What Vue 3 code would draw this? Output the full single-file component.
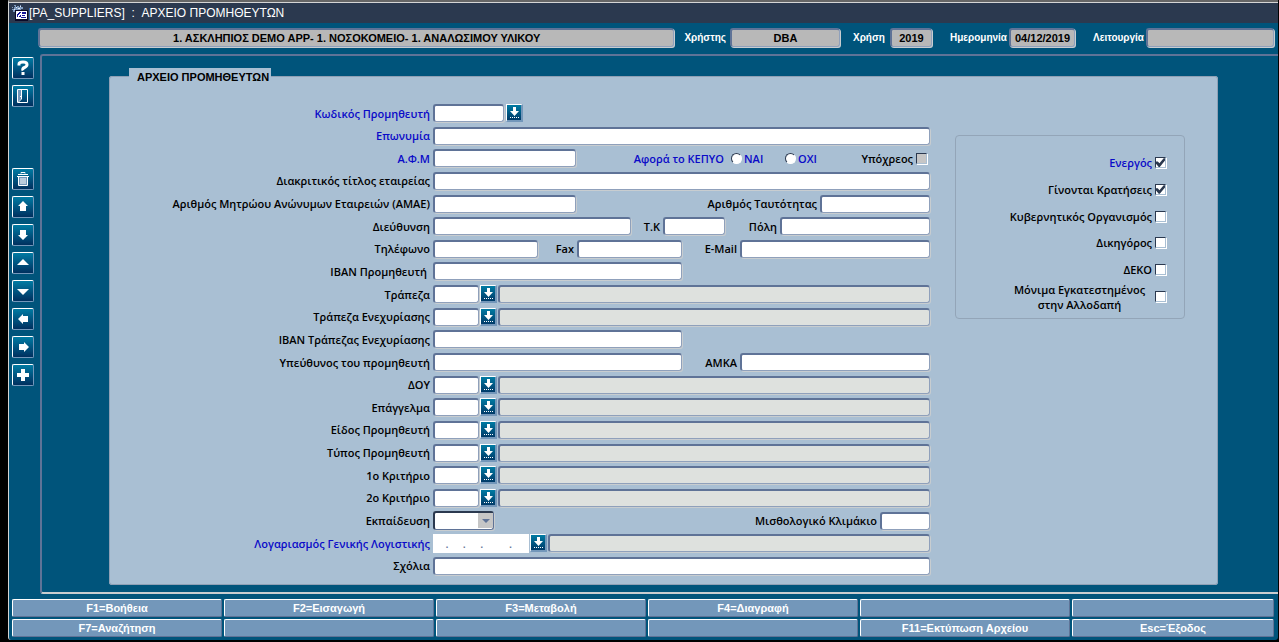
<script setup>
import { ref } from 'vue'

const kepyo = ref('')
const flags = ref([
  { label: 'Ενεργός', on: true, key: true },
  { label: 'Γίνονται Κρατήσεις', on: true },
  { label: 'Κυβερνητικός Οργανισμός', on: false },
  { label: 'Δικηγόρος', on: false },
  { label: 'ΔΕΚΟ', on: false },
  { label: 'Μόνιμα Εγκατεστημένος στην Αλλοδαπή', on: false },
])

const lookupsA = ['Τράπεζα', 'Τράπεζα Ενεχυρίασης']
const lookupsB = ['ΔΟΥ', 'Επάγγελμα', 'Είδος Προμηθευτή', 'Τύπος Προμηθευτή', '1ο Κριτήριο', '2ο Κριτήριο']

const tools = [
  { name: 'Πρώτη εγγραφή', d: 'M11 5l5 5h-2v5H8v-5H6z' },
  { name: 'Τελευταία εγγραφή', d: 'M8 6h6v5h2l-5 5-5-5h2z' },
  { name: 'Προηγούμενη εγγραφή', d: 'M11 7l6 6H5z' },
  { name: 'Επόμενη εγγραφή', d: 'M5 9h12l-6 6z' },
  { name: 'Προηγούμενο πεδίο', d: 'M6 11l5-5v2h5v6h-5v2z' },
  { name: 'Επόμενο πεδίο', d: 'M17 11l-5-5v2H7v6h5v2z' },
  { name: 'Νέα εγγραφή', d: 'M9 5h4v4h4v4h-4v4H9v-4H5V9h4z' },
]

const keys = [
  'F1=Βοήθεια', 'F2=Εισαγωγή', 'F3=Μεταβολή', 'F4=Διαγραφή', '', '',
  'F7=Αναζήτηση', '', '', '', 'F11=Εκτύπωση Αρχείου', 'Esc=Έξοδος',
]
</script>

<template>
  <div class="window">
    <header class="title">
      <svg class="logo" viewBox="0 0 16 16" aria-hidden="true" shape-rendering="crispEdges">
        <path d="M0 2h1v1H0zM2 0h2v2h1V1h2v1h1V0h1v2h2v2H9v1H3v2H1V5H0V4h2V2h1z" fill="#7f9cc0" />
        <path d="M4 2h1v1H4zM6 3h2v1H6zM2 4h1v1H2zM8 1h1v1H8z" fill="#dfe8f4" />
        <path d="M3 5h13v11H3z" fill="#0a0a28" />
        <path d="M4 6h11v8H4z" fill="#fff" />
        <path d="M5 9h1V8h1V7h2v1H8v1H7v1H6v2H5zM8 10h1v2H7v-1h1z" fill="#14149a" />
        <path d="M10 7h4v2h-4zM10 10h3v1h-3zM9 12h5v1H9z" fill="#14149a" />
      </svg>
      <h1>[PA_SUPPLIERS]&nbsp; :&nbsp; ΑΡΧΕΙΟ ΠΡΟΜΗΘΕΥΤΩΝ</h1>
    </header>

    <div class="status">
      <input class="info company" readonly aria-label="Εφαρμογή" value="1. ΑΣΚΛΗΠΙΟΣ DEMO APP- 1. ΝΟΣΟΚΟΜΕΙΟ- 1. ΑΝΑΛΩΣΙΜΟΥ ΥΛΙΚΟΥ" />
      <label for="user">Χρήστης</label>
      <input id="user" class="info user" readonly value="DBA" />
      <label for="year" class="mid">Χρήση</label>
      <input id="year" class="info year" readonly value="2019" />
      <label for="date" class="wide">Ημερομηνία</label>
      <input id="date" class="info date" readonly value="04/12/2019" />
      <label for="mode" class="wide">Λειτουργία</label>
      <input id="mode" class="info mode" readonly value="" />
    </div>

    <div class="body">
      <nav class="tools">
        <button type="button" aria-label="Βοήθεια">
          <svg viewBox="0 0 22 22"><path d="M7 8.500V7q0-2 4-2t4 2.500q0 2-2.500 3T11 13.500M11 15v3" fill="none" stroke="#fff" stroke-width="3" /></svg>
        </button>
        <button type="button" aria-label="Έξοδος">
          <svg viewBox="0 0 22 22"><path d="M5.500 4.500h10v13h-10z" fill="none" stroke="#fff" /><path d="M6 5h3v9l-3 3z" fill="#7397ba" /><path d="M9.500 5v9l-3 3M8 11.500h1" fill="none" stroke="#fff" /></svg>
        </button>
        <button type="button" class="apart" aria-label="Διαγραφή">
          <svg viewBox="0 0 22 22"><path d="M7 9h8v8H7z" fill="#7397ba" /><path d="M9 5.500V4.500h4v1M6 6.500h10M5 8.500h12M6.500 9v8.500h9V9M9 10v6M11 10v6M13 10v6" fill="none" stroke="#fff" /></svg>
        </button>
        <button v-for="t in tools" :key="t.name" type="button" :aria-label="t.name">
          <svg viewBox="0 0 22 22"><path :d="t.d" fill="#fff" /></svg>
        </button>
      </nav>

      <main class="frame">
        <fieldset class="panel">
          <legend>ΑΡΧΕΙΟ ΠΡΟΜΗΘΕΥΤΩΝ</legend>
          <form class="form" @submit.prevent>
            <div class="row">
              <label class="lead key" for="code">Κωδικός Προμηθευτή</label>
              <input id="code" class="w71" />
              <button type="button" class="lov gap" aria-label="Λίστα">
                <svg viewBox="0 0 14 15"><path d="M6 2h3v4h3l-4.500 5L3 6h3z" fill="#fff" /><path d="M3 12.500h9" stroke="#fff" stroke-dasharray="1 1" /></svg>
              </button>
            </div>
            <div class="row">
              <label class="lead key" for="name">Επωνυμία</label>
              <input id="name" class="fill" />
            </div>
            <div class="row">
              <label class="lead key" for="afm">Α.Φ.Μ</label>
              <input id="afm" class="w143" />
              <span class="next key kepyo">Αφορά το ΚΕΠΥΟ</span>
              <label class="radio key"><input v-model="kepyo" type="radio" name="kepyo" value="y" />ΝΑΙ</label>
              <label class="radio key"><input v-model="kepyo" type="radio" name="kepyo" value="n" />ΟΧΙ</label>
              <label class="liable">Υπόχρεος<input type="checkbox" class="off" /></label>
            </div>
            <div class="row">
              <label class="lead" for="brand">Διακριτικός τίτλος εταιρείας</label>
              <input id="brand" class="fill" />
            </div>
            <div class="row">
              <label class="lead" for="amae">Αριθμός Μητρώου Ανώνυμων Εταιρειών (ΑΜΑΕ)</label>
              <input id="amae" class="w143" />
              <label class="next" for="idno">Αριθμός Ταυτότητας</label>
              <input id="idno" class="w110" />
            </div>
            <div class="row">
              <label class="lead" for="addr">Διεύθυνση</label>
              <input id="addr" class="fill" />
              <label class="mid" for="zip">Τ.Κ</label>
              <input id="zip" class="w62" />
              <label class="mid city" for="city">Πόλη</label>
              <input id="city" class="w150" />
            </div>
            <div class="row">
              <label class="lead" for="tel">Τηλέφωνο</label>
              <input id="tel" class="w105" />
              <label class="mid fax" for="fax">Fax</label>
              <input id="fax" class="w105" />
              <label class="next" for="mail">E-Mail</label>
              <input id="mail" class="w190" />
            </div>
            <div class="row">
              <label class="lead inset" for="iban">ΙΒΑΝ Προμηθευτή</label>
              <input id="iban" class="w249" />
            </div>
            <div v-for="(l, i) in lookupsA" :key="l" class="row">
              <label class="lead" :for="'a' + i">{{ l }}</label>
              <input :id="'a' + i" class="w46" />
              <button type="button" class="lov" :aria-label="'Λίστα ' + l">
                <svg viewBox="0 0 14 15"><path d="M6 2h3v4h3l-4.500 5L3 6h3z" fill="#fff" /><path d="M3 12.500h9" stroke="#fff" stroke-dasharray="1 1" /></svg>
              </button>
              <input class="fill gray" readonly :aria-label="'Περιγραφή ' + l" />
            </div>
            <div class="row">
              <label class="lead" for="iban2">ΙΒΑΝ Τράπεζας Ενεχυρίασης</label>
              <input id="iban2" class="w249" />
            </div>
            <div class="row">
              <label class="lead" for="resp">Υπεύθυνος του προμηθευτή</label>
              <input id="resp" class="w249" />
              <label class="next" for="amka">ΑΜΚΑ</label>
              <input id="amka" class="w190" />
            </div>
            <div v-for="(l, i) in lookupsB" :key="l" class="row">
              <label class="lead" :for="'b' + i">{{ l }}</label>
              <input :id="'b' + i" class="w46" />
              <button type="button" class="lov" :aria-label="'Λίστα ' + l">
                <svg viewBox="0 0 14 15"><path d="M6 2h3v4h3l-4.500 5L3 6h3z" fill="#fff" /><path d="M3 12.500h9" stroke="#fff" stroke-dasharray="1 1" /></svg>
              </button>
              <input class="fill gray" readonly :aria-label="'Περιγραφή ' + l" />
            </div>
            <div class="row">
              <label class="lead" for="edu">Εκπαίδευση</label>
              <span class="pick">
                <select id="edu"><option></option></select>
                <svg viewBox="0 0 15 15" aria-hidden="true"><path d="M0 0h15v15H0z" fill="#c6c6c6" /><path d="M4 6h8l-4 4z" fill="#5f7397" /></svg>
              </span>
              <label class="next" for="scale">Μισθολογικό Κλιμάκιο</label>
              <input id="scale" class="w50" />
            </div>
            <div class="row">
              <label class="lead key" for="acc">Λογαριασμός Γενικής Λογιστικής</label>
              <input id="acc" class="mask" value="   .     .     .         ." />
              <button type="button" class="lov" aria-label="Λίστα λογαριασμών">
                <svg viewBox="0 0 14 15"><path d="M6 2h3v4h3l-4.500 5L3 6h3z" fill="#fff" /><path d="M3 12.500h9" stroke="#fff" stroke-dasharray="1 1" /></svg>
              </button>
              <input class="fill gray" readonly aria-label="Περιγραφή λογαριασμού" />
            </div>
            <div class="row">
              <label class="lead" for="notes">Σχόλια</label>
              <input id="notes" class="fill" />
            </div>
          </form>

          <div class="flags">
            <label v-for="f in flags" :key="f.label" :class="{ key: f.key }">
              <span>{{ f.label }}</span><input v-model="f.on" type="checkbox" />
            </label>
          </div>
        </fieldset>
      </main>
    </div>

    <footer class="keys">
      <button v-for="(k, i) in keys" :key="i" type="button">{{ k }}</button>
    </footer>
  </div>
</template>

<style>
body {
  background: #000;
}
</style>

<style scoped>
* {
  box-sizing: border-box;
}
.window {
  display: flex;
  flex-direction: column;
  min-height: calc(100vh - 2px);
  margin: 0 1px 2px 8px;
  border-top: 2px solid #666;
  border-left: 1px solid #d5d5d5;
  border-radius: 0 0 3px 3px;
  background: #00547b;
  font: 600 11px/15px "Open Sans", "Noto Sans", sans-serif;
  color: #000;
}
.title {
  display: flex;
  align-items: center;
  gap: 1px;
  height: 21px;
  padding-left: 3px;
  border-top: 1px solid #d5d5d5;
  background: #2b394f;
}
.logo {
  width: 16px;
  height: 16px;
}
h1 {
  margin: 0;
  font: 12px/16px "Liberation Sans", sans-serif;
  color: #fff;
}
input {
  height: 18px;
  margin: 0;
  padding: 0 4px;
  border: 1px solid #8fa0bb;
  border-top: 2px solid #5f7397;
  border-left: 2px solid #5f7397;
  border-radius: 3px;
  outline: none;
  background: #fff;
  box-shadow: 1px 1px 0 #c8cdd0;
  font: inherit;
  min-width: 0;
}
.status {
  display: flex;
  align-items: center;
  padding: 5px 4px 0 29px;
  font: bold 11px/14px "Liberation Sans", sans-serif;
}
.status label {
  margin: 0 4px 0 10px;
  font-size: 10px;
  color: #fff;
  white-space: nowrap;
}
.status label.mid {
  width: auto;
  margin: 0 5px 0 13px;
}
.status label.wide {
  margin: 0 2px 0 18px;
}
.info {
  height: 19px;
  background: #b8b8b8;
  text-align: center;
}
.company {
  flex: 1;
}
.user {
  width: 110px;
}
.year {
  width: 42px;
}
.date {
  width: 66px;
  padding: 0;
}
.mode {
  width: 128px;
}
.body {
  display: flex;
  flex: 1;
  padding-top: 7px;
}
.tools {
  display: flex;
  flex-direction: column;
  gap: 6px;
  width: 31px;
  padding: 3px 0 0 3px;
}
.tools button {
  width: 22px;
  height: 22px;
  padding: 0;
  border: 1px solid #fff;
  border-right-color: #7397ba;
  border-bottom-color: #7397ba;
  border-radius: 2px;
  background: linear-gradient(#007ba3, #00305f);
}
.tools .apart {
  margin-top: 55px;
}
.tools svg {
  display: block;
  width: 22px;
  height: 22px;
  margin: -1px;
}
.frame {
  display: flex;
  flex: 1;
  padding: 12px 60px 7px 67px;
  border: 2px solid #5f7397;
  border-right: 0;
  border-bottom-color: #c8cdd0;
  border-radius: 3px 0 0 3px;
}
.panel {
  display: flex;
  flex: 1;
  min-width: 0;
  margin: 0;
  padding: 19px 32px 9px 0;
  border: 1px solid #8fa0b5;
  border-radius: 3px;
  background: #a9bfd3;
}
legend {
  height: 17px;
  margin-left: 19px;
  padding: 2px 2px 0 8px;
  background: #a9bfd3;
  font: bold 11px/15px "Liberation Sans", sans-serif;
}
.form {
  display: flex;
  flex: 1;
  flex-direction: column;
  justify-content: space-between;
}
.row {
  display: flex;
  align-items: center;
  height: 18px;
}
.row label,
.row .next {
  white-space: nowrap;
}
.lead {
  width: 320px;
  margin-right: 3px;
  text-align: right;
}
.inset {
  padding-right: 3px;
}
.key {
  color: #0a0ac8;
}
.next {
  flex: 1;
  margin-right: 3px;
  text-align: right;
}
.kepyo {
  margin-right: 7px;
}
.mid {
  width: 29px;
  margin-right: 3px;
  text-align: right;
}
.city {
  width: 52px;
}
.fax {
  width: 36px;
}
.fill {
  flex: 1;
}
.gray {
  background: #dee1de;
}
.w46 { width: 46px; }
.w50 { width: 50px; }
.w62 { width: 62px; }
.w71 { width: 71px; }
.w105 { width: 105px; }
.w110 { width: 110px; }
.w143 { width: 143px; }
.w150 { width: 150px; }
.w190 { width: 190px; }
.w249 { width: 249px; }
.lov {
  width: 17px;
  height: 18px;
  margin: 0 1px;
  padding: 0;
  border: 1px solid #fff;
  border-right: 2px solid #7397ba;
  border-bottom: 2px solid #7397ba;
  background: linear-gradient(#007ba3, #003a68);
}
.lov.gap {
  margin-left: 2px;
}
.lov svg {
  display: block;
  width: 14px;
  height: 15px;
}
.radio {
  display: flex;
  align-items: center;
  gap: 2px;
  width: 54px;
}
input[type="radio"] {
  appearance: none;
  width: 11px;
  height: 11px;
  padding: 0;
  border: 1px solid #fff;
  border-top-color: #2b394f;
  border-left-color: #2b394f;
  border-radius: 50%;
  box-shadow: none;
}
.liable {
  display: flex;
  align-items: center;
  justify-content: flex-end;
  gap: 3px;
  width: 91px;
}
input[type="checkbox"] {
  appearance: none;
  flex: none;
  width: 11px;
  height: 11px;
  padding: 0;
  border: 1px solid #a9bfd3;
  border-top-color: #2b394f;
  border-left-color: #2b394f;
  border-radius: 0;
  box-shadow: 1px 1px 0 #fff;
}
input[type="checkbox"].off {
  margin-right: 3px;
  background: #c6c6c6;
}
input[type="checkbox"]:checked::before {
  content: "";
  display: block;
  width: 9px;
  height: 9px;
  background: #2b394f;
  clip-path: polygon(0 40%, 20% 40%, 38% 60%, 85% 5%, 100% 5%, 100% 30%, 42% 100%, 30% 100%, 0 65%);
}
.pick {
  display: grid;
  width: 61px;
  height: 19px;
}
.pick select,
.pick svg {
  grid-area: 1 / 1;
}
.pick select {
  appearance: none;
  width: 100%;
  height: 100%;
  border: 1px solid #5f7397;
  border-top: 2px solid #2b394f;
  border-left: 2px solid #2b394f;
  border-radius: 3px;
  background: #fff;
  box-shadow: 1px 1px 0 #c8cdd0;
}
.pick svg {
  place-self: center end;
  width: 15px;
  height: 15px;
  margin-right: 1px;
  pointer-events: none;
}
.mask {
  width: 96px;
  height: 19px;
  border: 0;
  border-radius: 0;
  box-shadow: none;
  color: #5f7397;
  white-space: pre;
}
.flags {
  display: flex;
  flex-direction: column;
  align-self: flex-start;
  width: 230px;
  height: 184px;
  margin: 31px 0 0 25px;
  padding: 13px 18px 8px 0;
  border: 1px solid #93a5b8;
  border-radius: 4px;
}
.flags label {
  display: flex;
  height: 27px;
  min-height: 0;
  align-items: center;
  justify-content: flex-end;
  gap: 3px;
}
.flags span {
  max-width: 145px;
  text-align: center;
}
.keys {
  display: grid;
  grid-template-columns: repeat(5, 210fr) 202fr;
  grid-auto-rows: 18px;
  gap: 2px;
  padding: 5px 4px 3px 3px;
}
.keys button {
  min-width: 0;
  padding: 0;
  border: 1px solid #fff;
  border-right-color: #5f7397;
  border-bottom-color: #5f7397;
  border-radius: 2px;
  background: #7397ba;
  font: bold 11px/14px "Liberation Sans", sans-serif;
  color: #fff;
}
</style>
